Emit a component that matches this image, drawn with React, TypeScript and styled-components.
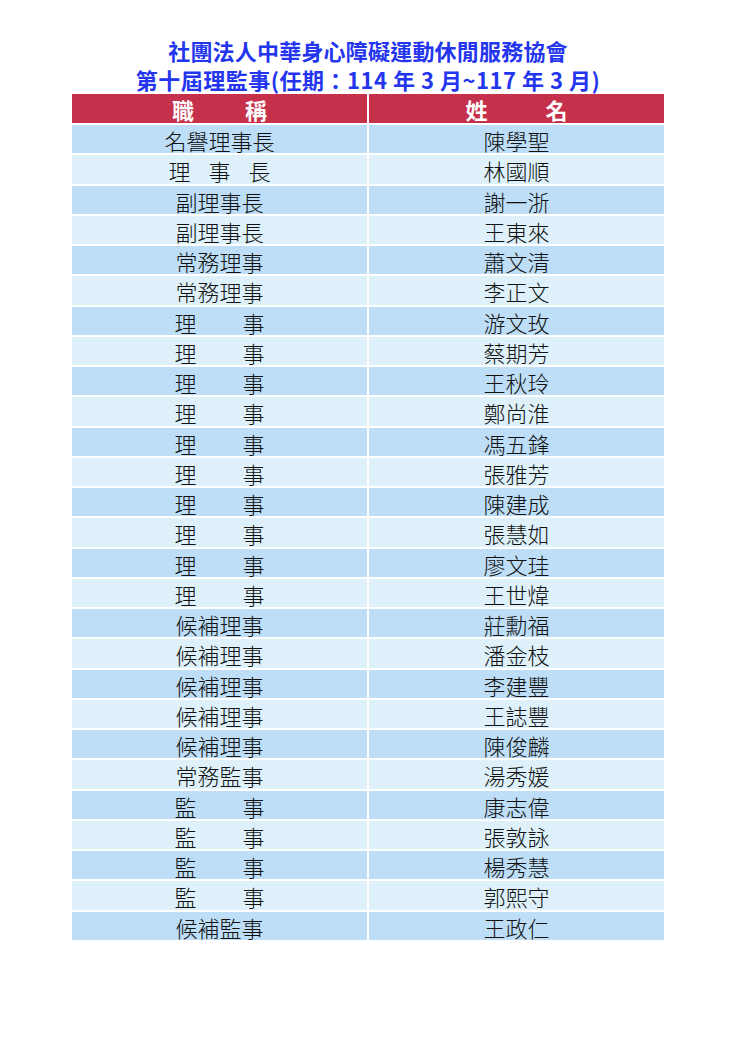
import { Fragment } from 'react';
import styled, { createGlobalStyle } from 'styled-components';

const GlobalStyle = createGlobalStyle`
  html, body {
    margin: 0;
    padding: 0;
    background: #ffffff;
  }
  body {
    font-family: "Noto Sans CJK TC", "Liberation Sans", sans-serif;
  }
`;

/* 成員名單：[職稱, 職稱展開寬度, 姓名] */
const members: [string, number | undefined, string][] = [
  ['名譽理事長', undefined, '陳學聖'],
  ['理事長', 102, '林國順'],
  ['副理事長', undefined, '謝一浙'],
  ['副理事長', undefined, '王東來'],
  ['常務理事', undefined, '蕭文清'],
  ['常務理事', undefined, '李正文'],
  ['理事', 90, '游文玫'],
  ['理事', 90, '蔡期芳'],
  ['理事', 90, '王秋玲'],
  ['理事', 90, '鄭尚淮'],
  ['理事', 90, '馮五鋒'],
  ['理事', 90, '張雅芳'],
  ['理事', 90, '陳建成'],
  ['理事', 90, '張慧如'],
  ['理事', 90, '廖文珪'],
  ['理事', 90, '王世煒'],
  ['候補理事', undefined, '莊勳福'],
  ['候補理事', undefined, '潘金枝'],
  ['候補理事', undefined, '李建豐'],
  ['候補理事', undefined, '王誌豐'],
  ['候補理事', undefined, '陳俊麟'],
  ['常務監事', undefined, '湯秀媛'],
  ['監事', 90, '康志偉'],
  ['監事', 90, '張敦詠'],
  ['監事', 90, '楊秀慧'],
  ['監事', 90, '郭熙守'],
  ['候補監事', undefined, '王政仁'],
];

const Page = styled.div`
  width: 736px;
  padding-top: 36px;
  display: flex;
  flex-direction: column;
  align-items: center;
`;

const Title = styled.h1`
  margin: 0;
  color: #2435ee;
  font-size: 22px;
  line-height: 29px;
  font-weight: 700;
  text-align: center;
  letter-spacing: 0.2px;
`;

const Term = styled.span`
  letter-spacing: 0.5px;
`;

const Table = styled.div`
  width: 592px;
  display: grid;
  grid-template-columns: 295px 295px;
  column-gap: 2px;
  row-gap: 2px;
`;

const HeadCell = styled.div`
  height: 29px;
  background: #c5304b;
  color: #ffffff;
  font-size: 22px;
  font-weight: 700;
  display: flex;
  align-items: center;
  justify-content: center;
`;

const Cell = styled.div<{ $shade: boolean }>`
  height: 28.25px;
  background: ${p => (p.$shade ? '#bddef6' : '#def1fa')};
  color: #111111;
  font-size: 22px;
  font-weight: 300;
  line-height: 1;
  display: flex;
  align-items: center;
  justify-content: center;
  padding-top: 2px;
  box-sizing: border-box;
`;

const Spread = styled.span<{ $w?: number }>`
  display: inline-flex;
  justify-content: space-between;
  width: ${p => (p.$w ? `${p.$w}px` : 'auto')};
`;

const Word = ({ text, w }: { text: string; w?: number }) => (
  <Spread $w={w}>
    {w ? text.split('').map((c, i) => <span key={i}>{c}</span>) : text}
  </Spread>
);

export default function App() {
  return (
    <>
      <GlobalStyle />
      <Page>
        <Title>
          社團法人中華身心障礙運動休閒服務協會
          <br />
          <Term>第十屆理監事(任期：114 年 3 月~117 年 3 月)</Term>
        </Title>
        <Table>
          <HeadCell>
            <Word text="職稱" w={95} />
          </HeadCell>
          <HeadCell>
            <Word text="姓名" w={102} />
          </HeadCell>
          {members.map(([role, w, name], i) => (
            <Fragment key={i}>
              <Cell $shade={i % 2 === 0}>
                <Word text={role} w={w} />
              </Cell>
              <Cell $shade={i % 2 === 0}>{name}</Cell>
            </Fragment>
          ))}
        </Table>
      </Page>
    </>
  );
}
